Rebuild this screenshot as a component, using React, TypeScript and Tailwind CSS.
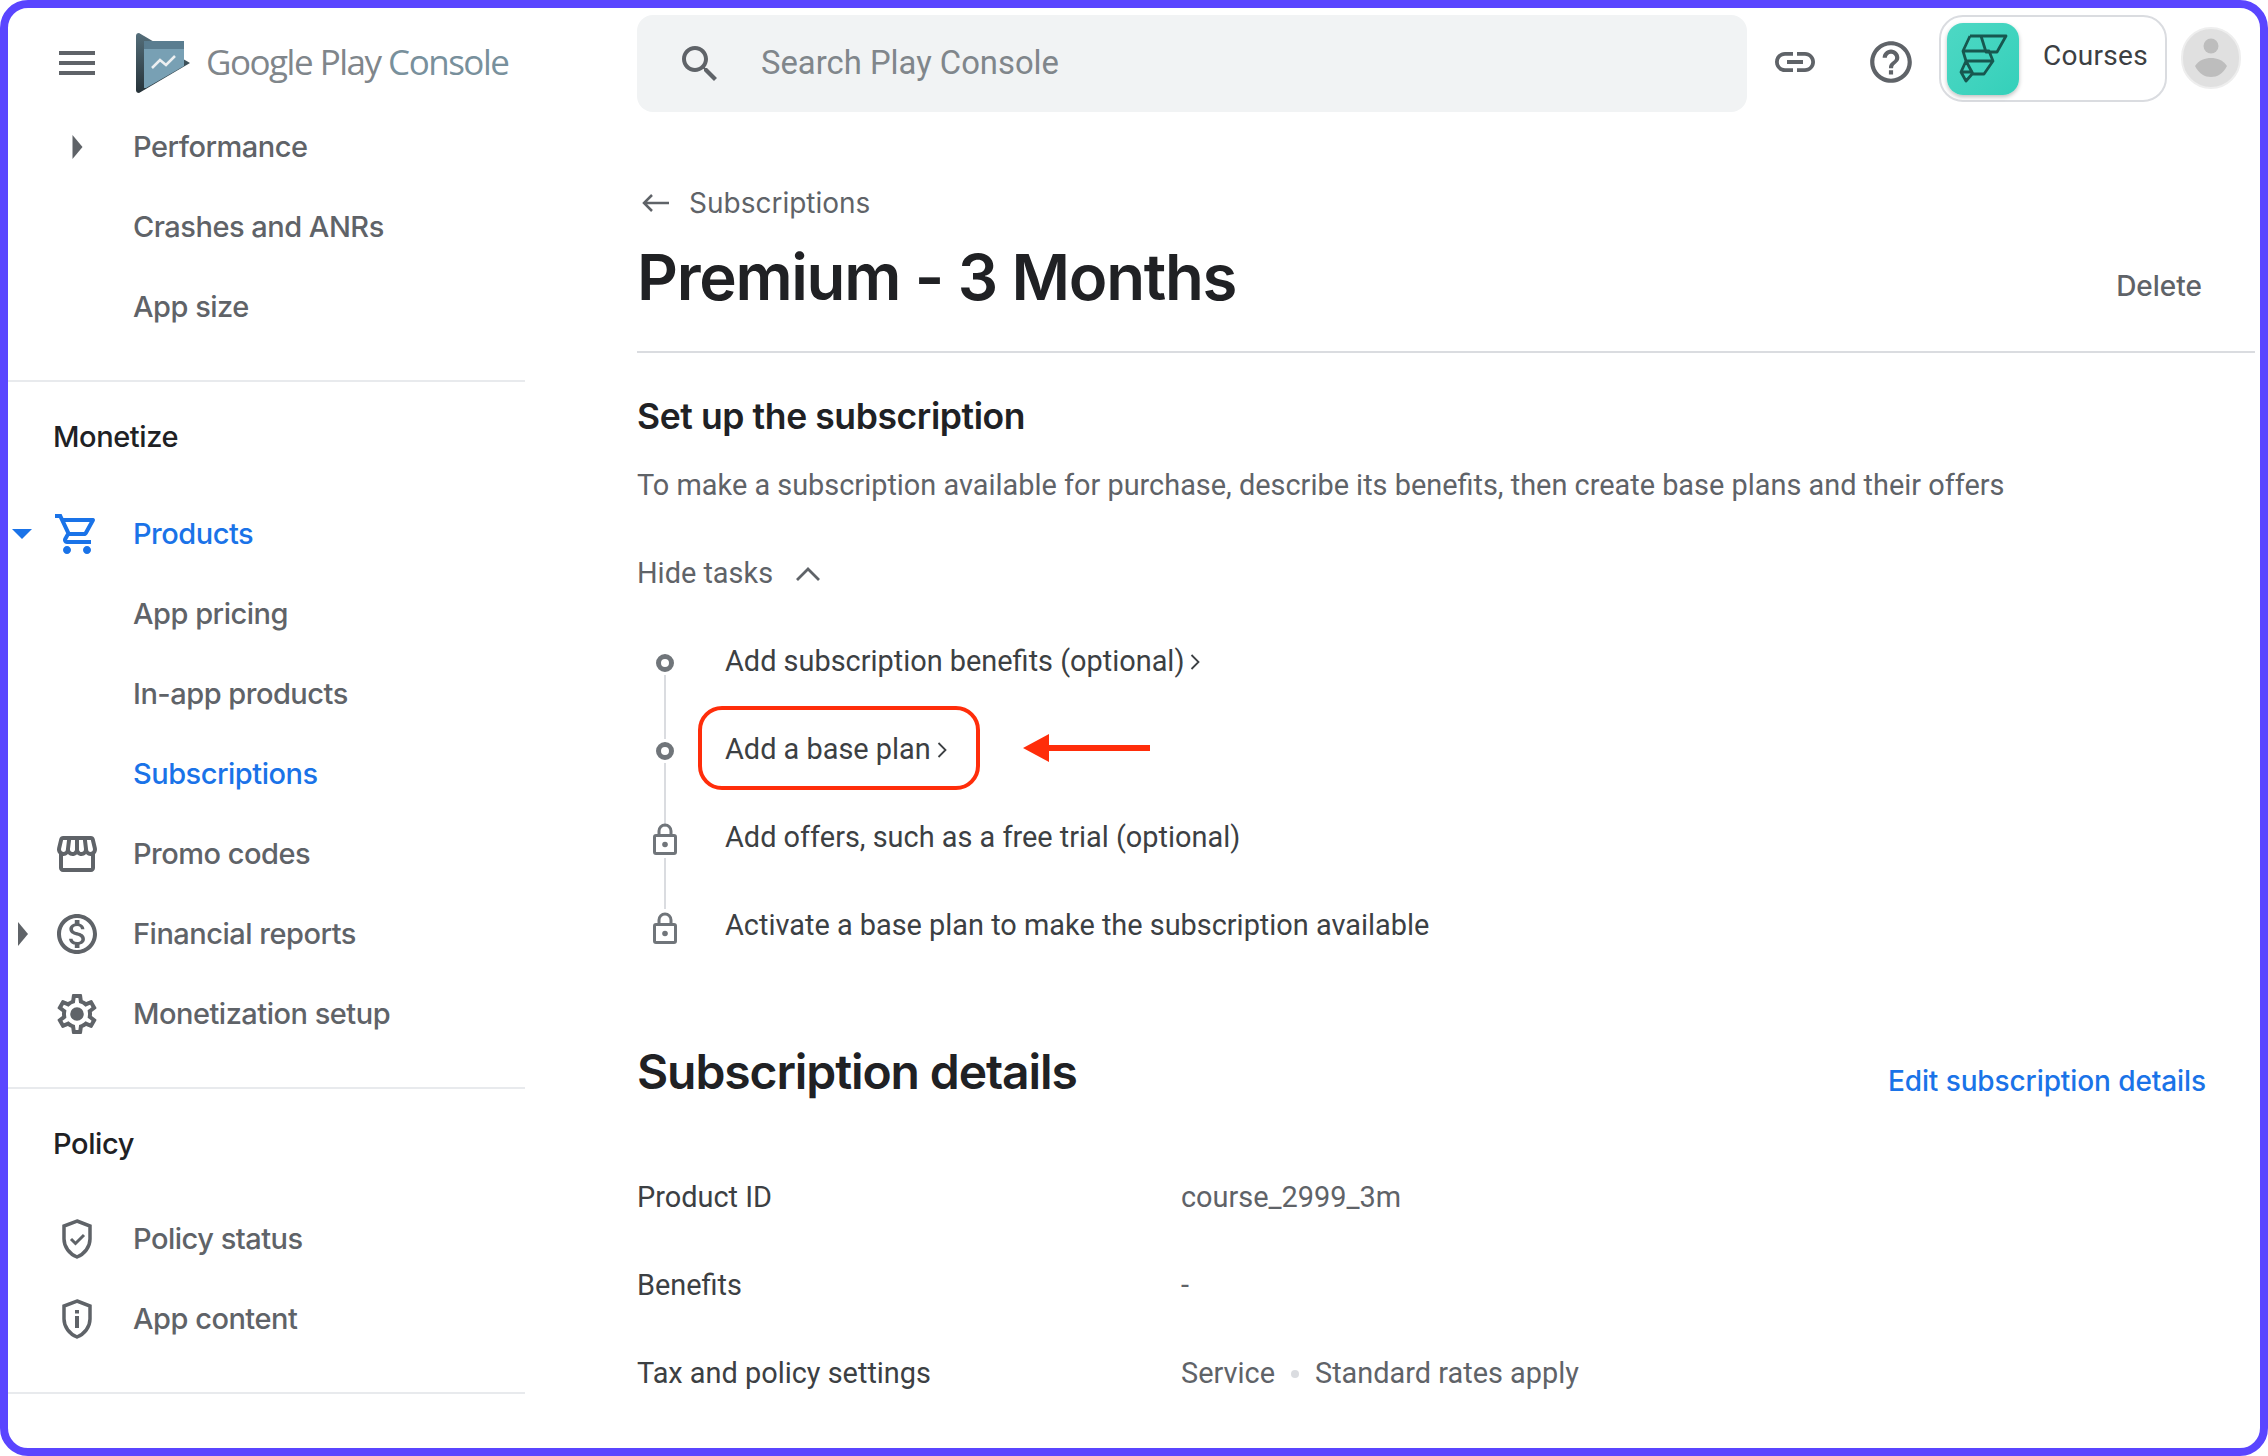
import type { ReactNode } from "react";

const Icon = ({ d, className }: { d: string; className: string }) => (
  <svg viewBox="0 0 24 24" fill="currentColor" className={className}>
    <path d={d} />
  </svg>
);

const paths = {
  menu: "M3 18h18v-2H3v2zm0-5h18v-2H3v2zm0-7v2h18V6H3z",
  search:
    "M15.5 14h-.79l-.28-.27C15.41 12.59 16 11.11 16 9.5 16 5.91 13.09 3 9.5 3S3 5.91 3 9.5 5.91 16 9.5 16c1.61 0 3.09-.59 4.23-1.57l.27.28v.79l5 4.99L20.49 19l-4.99-5zm-6 0C7.01 14 5 11.99 5 9.5S7.01 5 9.5 5 14 7.01 14 9.5 11.99 14 9.5 14z",
  link: "M3.9 12c0-1.71 1.39-3.1 3.1-3.1h4V7H7c-2.76 0-5 2.24-5 5s2.24 5 5 5h4v-1.9H7c-1.71 0-3.1-1.39-3.1-3.1zM8 13h8v-2H8v2zm9-6h-4v1.9h4c1.71 0 3.1 1.39 3.1 3.1s-1.39 3.1-3.1 3.1h-4V17h4c2.76 0 5-2.24 5-5s-2.24-5-5-5z",
  help: "M11 18h2v-2h-2v2zm1-16C6.48 2 2 6.48 2 12s4.48 10 10 10 10-4.48 10-10S17.52 2 12 2zm0 18c-4.41 0-8-3.59-8-8s3.59-8 8-8 8 3.59 8 8-3.59 8-8 8zm0-14c-2.21 0-4 1.79-4 4h2c0-1.1.9-2 2-2s2 .9 2 2c0 2-3 1.75-3 5h2c0-2.25 3-2.5 3-5 0-2.21-1.79-4-4-4z",
  cart: "M15.55 13c.75 0 1.41-.41 1.75-1.03l3.58-6.49c.37-.66-.11-1.48-.87-1.48H5.21l-.94-2H1v2h2l3.6 7.59-1.35 2.44C4.52 15.37 5.48 17 7 17h12v-2H7l1.1-2h7.45zM6.16 6h12.15l-2.76 5H8.53L6.16 6zM7 18c-1.1 0-1.99.9-1.99 2S5.9 22 7 22s2-.9 2-2-.9-2-2-2zm10 0c-1.1 0-1.99.9-1.99 2s.89 2 1.99 2 2-.9 2-2-.9-2-2-2z",
  store:
    "M21.9 8.89l-1.05-4.37c-.22-.9-1-1.52-1.91-1.52H5.05c-.9 0-1.69.63-1.9 1.52L2.1 8.89c-.24 1.02-.02 2.06.62 2.88.08.11.19.19.28.29V19c0 1.1.9 2 2 2h14c1.1 0 2-.9 2-2v-6.94c.09-.09.2-.18.28-.28.64-.82.87-1.87.62-2.89zm-2.99-3.9l1.05 4.37c.1.42.01.84-.25 1.17-.14.18-.44.47-.94.47-.61 0-1.14-.49-1.21-1.14L16.98 5l1.93-.01zM13 5h1.96l.54 4.52c.05.39-.07.78-.33 1.07-.22.26-.54.41-.95.41-.67 0-1.22-.59-1.22-1.31V5zM8.49 9.52L9.04 5H11v4.69c0 .72-.55 1.31-1.29 1.31-.34 0-.65-.15-.89-.41-.25-.29-.37-.68-.33-1.07zm-4.45-.16L5.05 5h1.97l-.58 4.86c-.08.65-.6 1.14-1.21 1.14-.49 0-.8-.29-.93-.47-.27-.32-.36-.75-.26-1.17zM5 19v-6.03c.08.01.15.03.23.03.87 0 1.66-.36 2.24-.95.6.6 1.4.95 2.31.95.87 0 1.65-.36 2.23-.93.59.57 1.39.93 2.29.93.84 0 1.64-.35 2.24-.95.58.59 1.37.95 2.24.95.08 0 .15-.02.23-.03V19H5z",
  dollar:
    "M12 2C6.48 2 2 6.48 2 12s4.48 10 10 10 10-4.48 10-10S17.52 2 12 2zm0 18c-4.41 0-8-3.59-8-8s3.59-8 8-8 8 3.59 8 8-3.59 8-8 8zm.31-8.86c-1.77-.45-2.34-.94-2.34-1.67 0-.84.79-1.43 2.1-1.43 1.38 0 1.9.66 1.94 1.64h1.71c-.05-1.34-.87-2.57-2.49-2.97V5H10.9v1.69c-1.51.32-2.72 1.3-2.72 2.81 0 1.79 1.49 2.69 3.66 3.21 1.95.46 2.34 1.15 2.34 1.87 0 .53-.39 1.39-2.1 1.39-1.6 0-2.23-.72-2.32-1.64H8.04c.1 1.7 1.36 2.66 2.86 2.97V19h2.34v-1.67c1.52-.29 2.72-1.16 2.73-2.77-.01-2.2-1.9-2.96-3.66-3.42z",
  gear: "M19.43 12.98c.04-.32.07-.64.07-.98 0-.34-.03-.66-.07-.98l2.11-1.65c.19-.15.24-.42.12-.64l-2-3.46c-.09-.16-.26-.25-.44-.25-.06 0-.12.01-.17.03l-2.49 1c-.52-.4-1.08-.73-1.69-.98l-.38-2.65C14.46 2.18 14.25 2 14 2h-4c-.25 0-.46.18-.49.42l-.38 2.65c-.61.25-1.17.59-1.69.98l-2.49-1c-.06-.02-.12-.03-.18-.03-.17 0-.34.09-.43.25l-2 3.46c-.13.22-.07.49.12.64l2.11 1.65c-.04.32-.07.65-.07.98 0 .33.03.66.07.98l-2.11 1.65c-.19.15-.24.42-.12.64l2 3.46c.09.16.26.25.44.25.06 0 .12-.01.17-.03l2.49-1c.52.4 1.08.73 1.69.98l.38 2.65c.03.24.24.42.49.42h4c.25 0 .46-.18.49-.42l.38-2.65c.61-.25 1.17-.59 1.69-.98l2.49 1c.06.02.12.03.18.03.17 0 .34-.09.43-.25l2-3.46c.12-.22.07-.49-.12-.64l-2.11-1.65zm-1.98-1.71c.04.31.05.52.05.73 0 .21-.02.43-.05.73l-.14 1.13.89.7 1.08.84-.7 1.21-1.27-.51-1.04-.42-.9.68c-.43.32-.84.56-1.25.73l-1.06.43-.16 1.13-.2 1.35h-1.4l-.19-1.35-.16-1.13-1.06-.43c-.43-.18-.83-.41-1.23-.71l-.91-.7-1.06.43-1.27.51-.7-1.21 1.08-.84.89-.7-.14-1.13c-.03-.31-.05-.54-.05-.74s.02-.43.05-.73l.14-1.13-.89-.7-1.08-.84.7-1.21 1.27.51 1.04.42.9-.68c.43-.32.84-.56 1.25-.73l1.06-.43.16-1.13.2-1.35h1.39l.19 1.35.16 1.13 1.06.43c.43.18.83.41 1.23.71l.91.7 1.06-.43 1.27-.51.7 1.21-1.07.85-.89.7.14 1.13zM12 8.6a3.4 3.4 0 1 0 0 6.8 3.4 3.4 0 0 0 0-6.8z",
};

const Shield = ({ children }: { children: ReactNode }) => (
  <svg viewBox="0 0 30 40" fill="none" stroke="currentColor" strokeWidth="3.500" className="w-[30px] h-[40px]">
    <path d="M15 2 28 7V20C28 28 22.500 35 15 38 7.500 35 2 28 2 20V7Z" />
    {children}
  </svg>
);

const Lock = () => (
  <svg viewBox="0 0 24 32" fill="none" className="w-[24px] h-[32px] text-[#70757a]">
    <path d="M6 13V8a6 6 0 0 1 12 0v5" stroke="currentColor" strokeWidth="3" />
    <rect x="1.500" y="12.500" width="21" height="18" rx="1.500" stroke="currentColor" strokeWidth="3" />
    <circle cx="12" cy="21.500" r="2.800" fill="currentColor" />
  </svg>
);

const Ring = () => (
  <div className="w-[18px] h-[18px] rounded-full border-[5px] border-[#70757a]" />
);

const Caret = ({ className }: { className: string }) => (
  <svg viewBox="0 0 10 24" fill="currentColor" className={className}>
    <path d="M0 0 10 12 0 24Z" />
  </svg>
);

const NavRow = ({
  label,
  icon,
  caret,
  active,
}: {
  label: string;
  icon?: ReactNode;
  caret?: ReactNode;
  active?: boolean;
}) => (
  <div className={`flex items-center h-[80px] ${active ? "text-[#1a73e8]" : "text-[#5f6368]"}`}>
    <div className="w-[40px] flex justify-center shrink-0">{caret}</div>
    <div className="w-[58px] flex justify-center shrink-0">{icon}</div>
    <span className="ml-[27px] text-[29px] font-medium tracking-[-0.5px]">{label}</span>
  </div>
);

const Sidebar = () => (
  <aside className="w-[629px] shrink-0 font-['Inter',sans-serif]">
    <div className="h-[99px] flex items-center pt-[10px]">
      <Icon d={paths.menu} className="w-[48px] h-[48px] ml-[45px] text-[#5f6368]" />
      <svg viewBox="0 0 56 62" className="w-[56px] h-[62px] ml-[35px]">
        <defs>
          <linearGradient id="playGrad" x1="0" y1="0" x2="0" y2="1">
            <stop offset="0" stopColor="#546e7a" />
            <stop offset="1" stopColor="#263238" />
          </linearGradient>
        </defs>
        <path d="M3 1 54 31 3 61C1 61 0 60 0 58V4C0 2 1 1 3 1Z" fill="url(#playGrad)" />
        <path d="M8 11H48V34L10 56H8Z" fill="#78a0b4" />
        <rect x="8" y="9" width="40" height="8" fill="#5a7d90" />
        <path d="M16 36 24 28 30 33 39 24" fill="none" stroke="#eceff1" strokeWidth="2.500" />
      </svg>
      <span className="ml-[14px] text-[35px] tracking-[-1.500px] text-[#80868b] font-['Open_Sans',sans-serif]">
        Google Play <span className="text-[#78909c]">Console</span>
      </span>
    </div>

    <NavRow label="Performance" icon={<Caret className="w-[11px] h-[24px] text-[#5f6368]" />} />
    <NavRow label="Crashes and ANRs" />
    <NavRow label="App size" />
    <div className="mt-[33px] h-[2px] w-[517px] bg-[#e8eaed]" />

    <div className="h-[112px] pt-[33px] pl-[45px] text-[29px] font-medium tracking-[-0.4px] text-[#202124]">Monetize</div>
    <NavRow
      active
      label="Products"
      caret={
        <svg viewBox="0 0 20 10" fill="currentColor" className="w-[20px] h-[10px] -ml-[13px]">
          <path d="M0 0H20L10 10Z" />
        </svg>
      }
      icon={<Icon d={paths.cart} className="w-[48px] h-[48px]" />}
    />
    <NavRow label="App pricing" />
    <NavRow label="In-app products" />
    <NavRow active label="Subscriptions" />
    <NavRow label="Promo codes" icon={<Icon d={paths.store} className="w-[48px] h-[48px]" />} />
    <NavRow
      label="Financial reports"
      caret={<Caret className="w-[10px] h-[24px] -ml-[10px]" />}
      icon={<Icon d={paths.dollar} className="w-[48px] h-[48px]" />}
    />
    <NavRow label="Monetization setup" icon={<Icon d={paths.gear} className="w-[48px] h-[48px]" />} />
    <div className="mt-[33px] h-[2px] w-[517px] bg-[#e8eaed]" />

    <div className="h-[110px] pt-[33px] pl-[45px] text-[29px] font-medium tracking-[-0.4px] text-[#202124]">Policy</div>
    <NavRow
      label="Policy status"
      icon={
        <Shield>
          <path d="M9 20l4.500 4.500L22 16" strokeWidth="3" />
        </Shield>
      }
    />
    <NavRow
      label="App content"
      icon={
        <Shield>
          <path d="M15 17V29M15 11V14.500" strokeWidth="4" />
        </Shield>
      }
    />
    <div className="mt-[33px] h-[2px] w-[517px] bg-[#e8eaed]" />
  </aside>
);

const TopBar = () => (
  <div className="flex items-start pt-[7px]">
    <div className="w-[1110px] h-[97px] rounded-[16px] bg-[#f1f3f4] flex items-center">
      <Icon d={paths.search} className="w-[48px] h-[48px] ml-[39px] text-[#5f6368]" />
      <span className="ml-[37px] text-[32.800px] text-[#80868b]">Search Play Console</span>
    </div>
    <Icon d={paths.link} className="w-[48px] h-[48px] ml-[24px] mt-[23px] text-[#5f6368]" />
    <Icon d={paths.help} className="w-[50px] h-[50px] ml-[47px] mt-[22px] text-[#5f6368]" />
    <div className="ml-[23px] w-[228px] h-[87px] rounded-[24px] border-2 border-[#dadce0] flex items-start pl-[6px] pt-[6px] bg-white">
      <div className="w-[72px] h-[72px] rounded-[16px] bg-gradient-to-br from-[#4dd8c4] to-[#34d0ba] shadow-[0_2px_4px_rgba(0,0,0,0.25)]">
        <svg viewBox="0 0 72 72" fill="none" stroke="#17574f" strokeWidth="2.800" strokeLinejoin="round" className="w-[72px] h-[72px]">
          <path d="M23 13H59L50 29H39L34 13M23 13 16 28 19 38H46L37 51H26L19 38 14 49 19 58 26 50M16 28H42L46 38M39 29 42 28M14 49H26" />
        </svg>
      </div>
      <span className="ml-[24px] mt-[12px] text-[28px] tracking-[0.3px] text-[#3c4043]">Courses</span>
    </div>
    <div className="ml-[14px] mt-[12px] w-[60px] h-[62px] rounded-full bg-[#e0e0e0] border-2 border-[#eeeeee] flex items-center justify-center">
      <svg viewBox="0 0 32 40" fill="#bdbdbd" className="w-[32px] h-[40px]">
        <circle cx="16" cy="8" r="7.500" />
        <path d="M0 28C4 22 10 20 16 20S28 22 32 28C28 36 22 39 16 39S4 36 0 28Z" />
      </svg>
    </div>
  </div>
);

const TaskLine = ({ className }: { className: string }) => (
  <div className={`my-[3px] w-[2px] bg-[#dadce0] ${className}`} />
);

const Chevron = () => (
  <svg viewBox="0 0 10 18" fill="none" stroke="currentColor" strokeWidth="1.800" className="ml-[6px] w-[10px] h-[18px]">
    <path d="M1.500 2 8.500 9 1.500 16" />
  </svg>
);

const Tasks = () => (
  <div className="mt-[22px] flex">
    <div className="w-[56px] flex flex-col items-center pt-[38px]">
      <Ring />
      <TaskLine className="h-[64px]" />
      <Ring />
      <TaskLine className="h-[64px]" />
      <div className="-mt-[7px]"><Lock /></div>
      <TaskLine className="h-[51px]" />
      <Lock />
    </div>
    <div className="ml-[32px] flex flex-col text-[28.900px] text-[#3c4043]">
      <div className="h-[88px] pt-[4px] flex items-center">
        Add subscription benefits (optional)
        <Chevron />
      </div>
      <div className="h-[88px] flex items-center">
        <div className="-ml-[27px] w-[282px] h-[84px] pt-[4px] border-[4px] border-[#ff2d0a] rounded-[24px] flex items-center pl-[23px]">
          Add a base plan
          <Chevron />
        </div>
        <svg viewBox="0 0 127 30" fill="#ff2d0a" className="ml-[43px] w-[127px] h-[30px]">
          <path d="M0 15 26 1V12H127V18H26V29Z" />
        </svg>
      </div>
      <div className="h-[88px] pt-[4px] flex items-center">Add offers, such as a free trial (optional)</div>
      <div className="h-[88px] pt-[4px] flex items-center">Activate a base plan to make the subscription available</div>
    </div>
  </div>
);

const DetailRow = ({ label, children }: { label: string; children: ReactNode }) => (
  <div className="h-[88px] flex items-center text-[28.900px]">
    <div className="w-[544px] text-[#3c4043]">{label}</div>
    <div className="text-[#5f6368] flex items-center">{children}</div>
  </div>
);

const Main = () => (
  <main className="flex-1 min-w-0 font-['Roboto',sans-serif]">
    <TopBar />
    <div className="mt-[71px] h-[40px] flex items-center text-[#5f6368] font-['Inter',sans-serif]">
      <svg viewBox="0 0 28 20" fill="none" stroke="currentColor" strokeWidth="2.500" className="w-[28px] h-[20px] ml-[4px]">
        <path d="M28 10H3M11 2 3 10 11 18" />
      </svg>
      <span className="ml-[20px] text-[28px] tracking-[0px]">Subscriptions</span>
    </div>
    <div className="mt-[14px] h-[80px] flex items-center justify-between pr-[58px] font-['Inter',sans-serif]">
      <h1 className="text-[63.500px] font-semibold tracking-[-1.300px] text-[#202124]">Premium - 3 Months</h1>
      <span className="text-[28px] font-medium text-[#5f6368] mt-[18px] tracking-[0px]">Delete</span>
    </div>
    <div className="mt-[34px] h-[2px] w-[1618px] bg-[#dadce0]" />
    <h2 className="mt-[42px] h-[44px] leading-[44px] text-[35.500px] font-semibold tracking-[-0.4px] text-[#202124] font-['Inter',sans-serif]">
      Set up the subscription
    </h2>
    <p className="mt-[26px] h-[40px] leading-[40px] text-[28.900px] text-[#5f6368]">
      To make a subscription available for purchase, describe its benefits, then create base plans and their offers
    </p>
    <div className="mt-[49px] h-[40px] flex items-center text-[28.900px] text-[#5f6368]">
      Hide tasks
      <svg viewBox="0 0 26 16" fill="none" stroke="currentColor" strokeWidth="2.800" className="ml-[22px] w-[26px] h-[16px]">
        <path d="M2 14 13 3 24 14" />
      </svg>
    </div>
    <Tasks />
    <div className="mt-[72px] h-[64px] flex items-center justify-between pr-[54px] font-['Inter',sans-serif]">
      <h2 className="text-[48px] font-semibold tracking-[-1.100px] text-[#202124]">Subscription details</h2>
      <span className="text-[28px] font-medium tracking-[-0.1px] text-[#1a73e8] mt-[18px]">Edit subscription details</span>
    </div>
    <div className="mt-[50px]">
      <DetailRow label="Product ID">course_2999_3m</DetailRow>
      <DetailRow label="Benefits">-</DetailRow>
      <DetailRow label="Tax and policy settings">
        Service
        <span className="mx-[16px] w-[8px] h-[8px] rounded-full bg-[#dadce0]" />
        Standard rates apply
      </DetailRow>
    </div>
  </main>
);

export default function App() {
  return (
    <div className="w-[2268px] h-[1456px] bg-white border-[8px] border-[#5a45ff] rounded-[28px] overflow-hidden flex">
      <Sidebar />
      <Main />
    </div>
  );
}
